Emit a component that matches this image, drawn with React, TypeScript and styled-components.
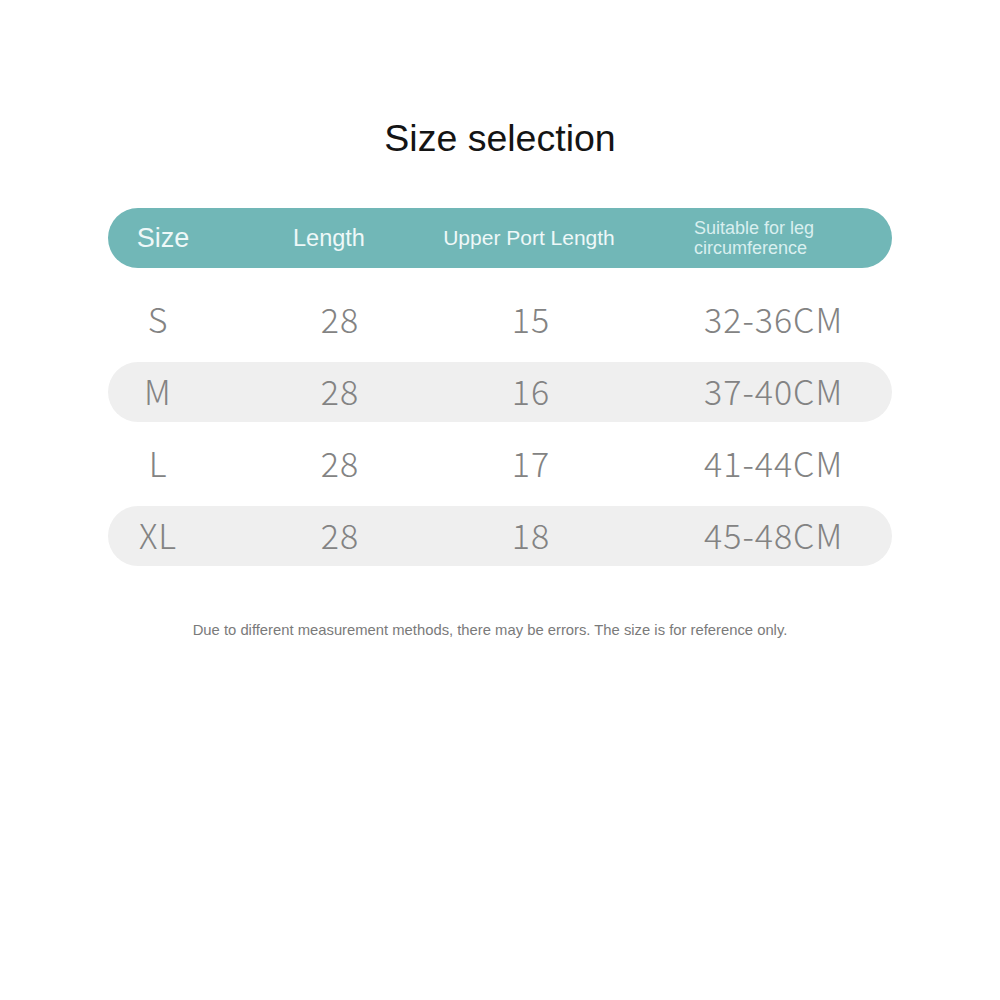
import * as React from 'react'
import styled, { createGlobalStyle } from 'styled-components'

const GlobalStyle = createGlobalStyle`
  html, body {
    margin: 0;
    padding: 0;
    background: #ffffff;
  }
`

const Page = styled.div`
  width: 1000px;
  height: 1000px;
  padding-top: 116px;
  box-sizing: border-box;
  display: flex;
  flex-direction: column;
  align-items: center;
  font-family: 'Liberation Sans', Arial, sans-serif;
`

const Title = styled.h1`
  margin: 0;
  font-size: 37.5px;
  line-height: 44px;
  font-weight: 400;
  color: #141414;
`

const Table = styled.div`
  width: 784px;
  margin-top: 48px;
  display: flex;
  flex-direction: column;
  gap: 12px;
`

const HeaderBar = styled.div`
  height: 60px;
  border-radius: 30px;
  background: #71b7b7;
  display: flex;
  align-items: center;
  margin-bottom: 10px;
`

const HeadCell = styled.div<{ $w?: number; $size: number; $pad?: number; $faint?: boolean }>`
  flex: ${p => (p.$w ? `0 0 ${p.$w}px` : '1 1 auto')};
  text-align: ${p => (p.$pad ? 'left' : 'center')};
  padding-left: ${p => p.$pad || 0}px;
  font-size: ${p => p.$size}px;
  line-height: ${p => (p.$faint ? 20 : 28)}px;
  color: ${p => (p.$faint ? '#d9efef' : '#eef8f8')};
  white-space: ${p => (p.$faint ? 'normal' : 'nowrap')};
`

const Row = styled.div<{ $band: boolean }>`
  height: 60px;
  border-radius: 30px;
  background: ${p => (p.$band ? '#efefef' : 'transparent')};
  display: flex;
  align-items: center;
  font-family: 'Noto Sans CJK SC', 'Noto Sans', sans-serif;
  font-size: 34px;
  font-weight: 300;
  color: #838383;
  letter-spacing: 1px;
`

const Cell = styled.div<{ $w?: number; $pad?: number }>`
  flex: ${p => (p.$w ? `0 0 ${p.$w}px` : '1 1 auto')};
  text-align: ${p => (p.$pad ? 'left' : 'center')};
  padding-left: ${p => p.$pad || 0}px;
  white-space: nowrap;
  margin-top: -3px;
`

const Note = styled.p`
  margin: 54px 20px 0 0;
  font-size: 14.8px;
  line-height: 20px;
  color: #7a7a7a;
`

const rows = [
  { size: 'S', len: '28', port: '15', leg: '32-36CM' },
  { size: 'M', len: '28', port: '16', leg: '37-40CM' },
  { size: 'L', len: '28', port: '17', leg: '41-44CM' },
  { size: 'XL', len: '28', port: '18', leg: '45-48CM' },
]

export default function App() {
  return (
    <Page>
      <GlobalStyle />
      <Title>Size selection</Title>
      <Table>
        <HeaderBar>
          <HeadCell $w={110} $size={27}>Size</HeadCell>
          <HeadCell $w={222} $size={23.5}>Length</HeadCell>
          <HeadCell $w={178} $size={21}>Upper Port Length</HeadCell>
          <HeadCell $size={18} $pad={76} $faint>
            Suitable for leg
            <br />
            circumference
          </HeadCell>
        </HeaderBar>
        {rows.map((r, i) => (
          <Row key={r.size} $band={i % 2 === 1}>
            <Cell $w={100}>{r.size}</Cell>
            <Cell $w={264}>{r.len}</Cell>
            <Cell $w={118}>{r.port}</Cell>
            <Cell $pad={114}>{r.leg}</Cell>
          </Row>
        ))}
      </Table>
      <Note>Due to different measurement methods, there may be errors. The size is for reference only.</Note>
    </Page>
  )
}
